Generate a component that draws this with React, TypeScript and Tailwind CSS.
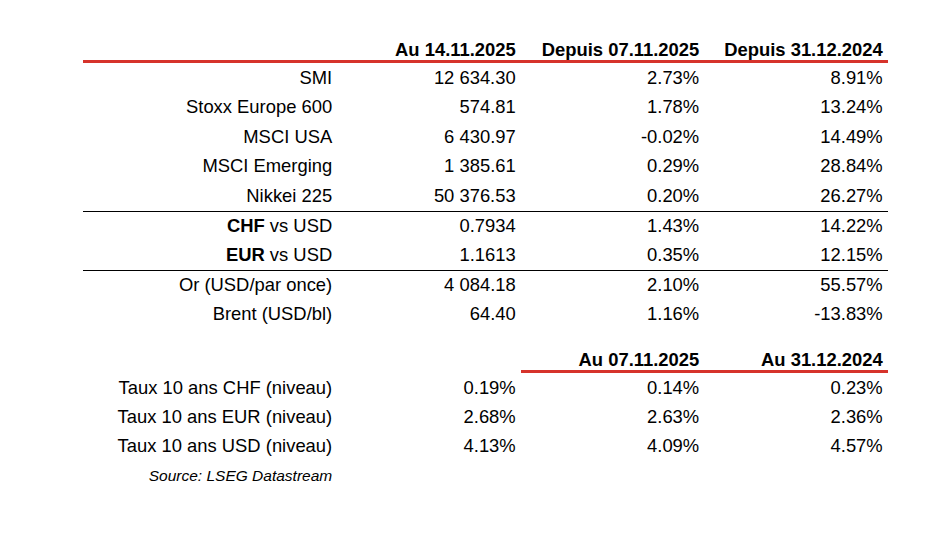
const RED = "border-[#d6332b]";

type Row = { label: React.ReactNode; a: string; b: string; c: string };

const indices: Row[] = [
  { label: "SMI", a: "12 634.30", b: "2.73%", c: "8.91%" },
  { label: "Stoxx Europe 600", a: "574.81", b: "1.78%", c: "13.24%" },
  { label: "MSCI USA", a: "6 430.97", b: "-0.02%", c: "14.49%" },
  { label: "MSCI Emerging", a: "1 385.61", b: "0.29%", c: "28.84%" },
  { label: "Nikkei 225", a: "50 376.53", b: "0.20%", c: "26.27%" },
];

const fx: Row[] = [
  { label: <><b className="font-bold">CHF</b> vs USD</>, a: "0.7934", b: "1.43%", c: "14.22%" },
  { label: <><b className="font-bold">EUR</b> vs USD</>, a: "1.1613", b: "0.35%", c: "12.15%" },
];

const commodities: Row[] = [
  { label: "Or (USD/par once)", a: "4 084.18", b: "2.10%", c: "55.57%" },
  { label: "Brent (USD/bl)", a: "64.40", b: "1.16%", c: "-13.83%" },
];

const rates: Row[] = [
  { label: "Taux 10 ans CHF (niveau)", a: "0.19%", b: "0.14%", c: "0.23%" },
  { label: "Taux 10 ans EUR (niveau)", a: "2.68%", b: "2.63%", c: "2.36%" },
  { label: "Taux 10 ans USD (niveau)", a: "4.13%", b: "4.09%", c: "4.57%" },
];

const grid = "grid grid-cols-[254.5px_183.5px_183.5px_183.5px]";
const cell = "flex items-center justify-end pr-[5.3px] whitespace-nowrap";

function DataRow({ row, height, top }: { row: Row; height: string; top?: boolean }) {
  return (
    <div className={`${grid} ${height} ${top ? "border-t border-black" : ""}`}>
      <div className={cell}>
        <span>{row.label}</span>
      </div>
      <div className={cell}>{row.a}</div>
      <div className={cell}>{row.b}</div>
      <div className={cell}>{row.c}</div>
    </div>
  );
}

export default function App() {
  return (
    <div
      className="h-[533px] w-[949px] overflow-hidden bg-white pl-[83px] pt-[40px] text-[18.4px] text-black"
      style={{ fontFamily: '"Liberation Sans", Arial, sans-serif' }}
    >
      <div className="w-[805px]">
        {/* header */}
        <div className={`${grid} border-b-[3px] ${RED} font-bold leading-[20px]`}>
          <div />
          <div className={cell}>Au 14.11.2025</div>
          <div className={cell}>Depuis 07.11.2025</div>
          <div className={cell}>Depuis 31.12.2024</div>
        </div>

        {indices.map((row, i) => (
          <DataRow key={i} row={row} height="h-[29.5px]" />
        ))}
        {fx.map((row, i) => (
          <DataRow key={i} row={row} height={i === 0 ? "h-[30px]" : "h-[29px]"} top={i === 0} />
        ))}
        {commodities.map((row, i) => (
          <DataRow key={i} row={row} height={i === 0 ? "h-[30px]" : "h-[29px]"} top={i === 0} />
        ))}

        {/* rates */}
        <div className={`${grid} mt-[21.5px] font-bold leading-[20px]`}>
          <div />
          <div />
          <div className={`${cell} border-b-[3px] ${RED}`}>Au 07.11.2025</div>
          <div className={`${cell} border-b-[3px] ${RED}`}>Au 31.12.2024</div>
        </div>
        {rates.map((row, i) => (
          <DataRow key={i} row={row} height="h-[29px]" />
        ))}
        <div className={`${grid} h-[31px]`}>
          <div className={`${cell} text-[15.5px] italic`}>Source: LSEG Datastream</div>
        </div>
      </div>
    </div>
  );
}
